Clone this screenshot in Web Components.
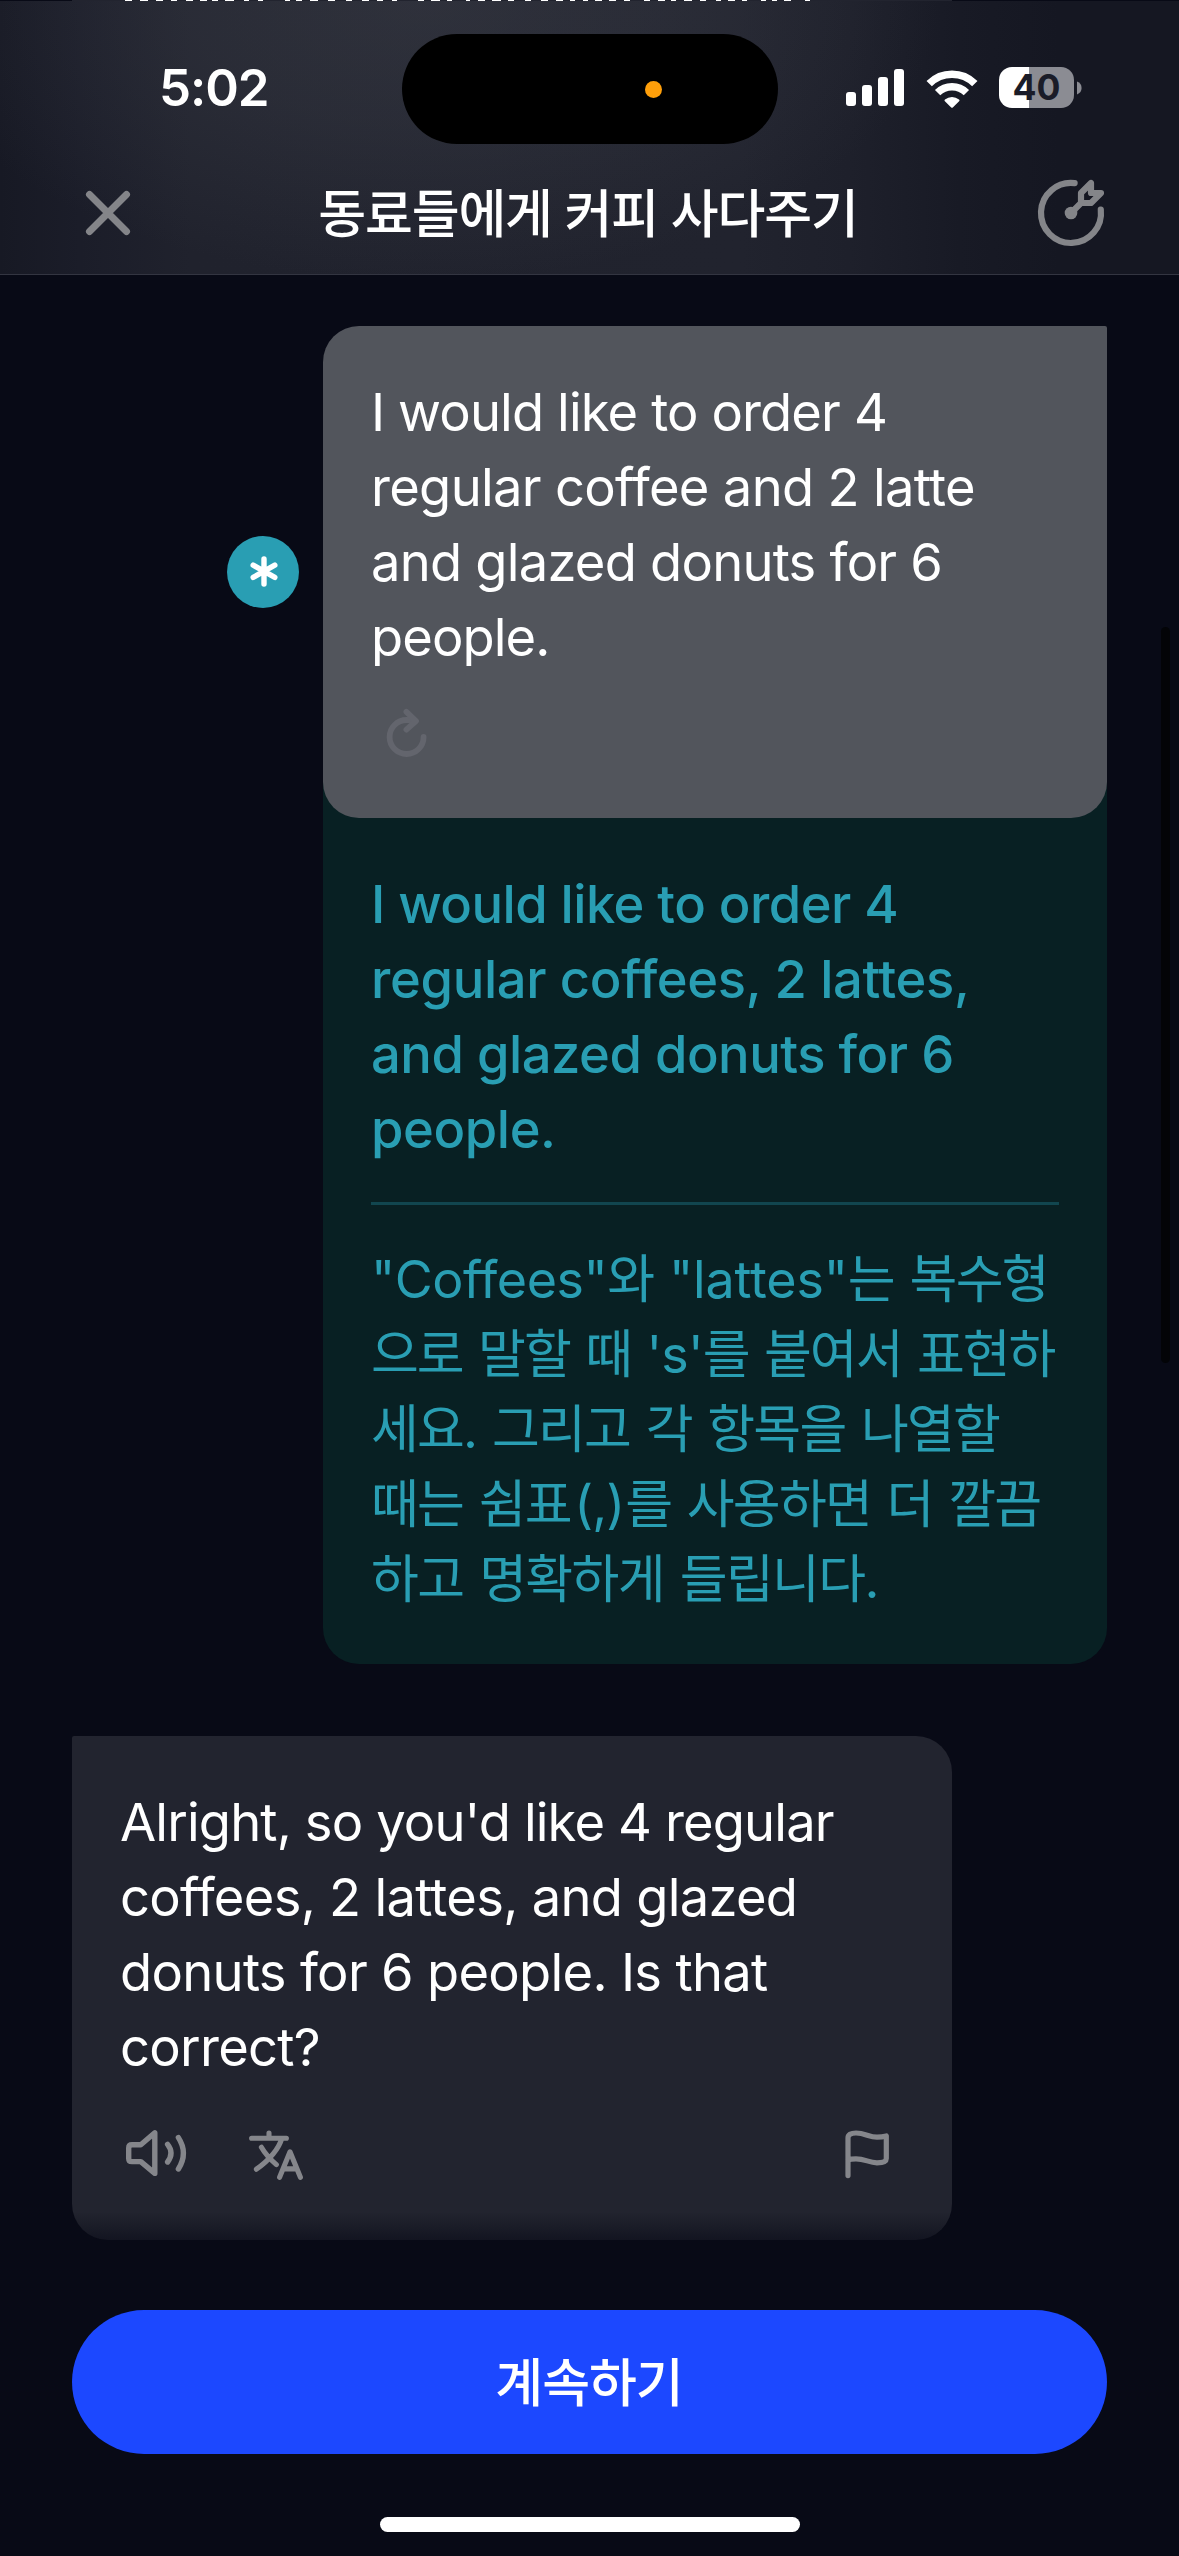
<!DOCTYPE html>
<html lang="ko">
<head>
<meta charset="utf-8">
<title>동료들에게 커피 사다주기</title>
<style>
  html, body { margin: 0; background: #080a16; }
  body { width: 1179px; height: 2556px; overflow: hidden; }
</style>
</head>
<body>
<chat-screen></chat-screen>
<script>
const define = (name, html, ready) => {
  const tpl = document.createElement('template');
  tpl.innerHTML = html;
  customElements.define(name, class extends HTMLElement {
    constructor() {
      super();
      this.attachShadow({ mode: 'open' }).append(tpl.content.cloneNode(true));
    }
    connectedCallback() { if (ready) ready(this); }
  });
};

/* Line of text; "track" is its letter spacing in px */
define('text-line', `
<style>:host{display:block;white-space:nowrap}</style><slot></slot>`,
  el => { if (el.hasAttribute('track')) el.style.letterSpacing = el.getAttribute('track') + 'px'; });
define('text-run', `
<style>:host{display:inline}:host([tight]){margin:0 1px 0 -13px}</style><slot></slot>`,
  el => { el.style.letterSpacing = el.getAttribute('track') + 'px'; });

const ICONS = {
  close: [44, 44, 7, '<path d="M3.5 3.5 40.5 40.5M40.5 3.5 3.5 40.5"/>'],
  goal: [66, 66, 6.2, '<path d="M36.6 3.2A30 30 0 1 0 62.8 29.6"/><circle cx="33" cy="33" r="6.3" fill="currentColor" stroke="none"/><path d="M33 33 43 23M43 13 53 3V13H63L53 23H43Z"/>'],
  retry: [42, 48, 5.8, '<path d="M37.6 28A17 17 0 1 1 20.6 11H28"/><path d="M20.4 2.8 30 12 20.4 20.6"/>'],
  speaker: [61, 46, 5.4, '<path d="M6 14.7H14.8L28.8 2.8V43.4L14.8 31.6H6Q2.7 31.6 2.7 28.4V17.9Q2.7 14.7 6 14.7Z"/><path d="M41.6 14.4Q48.4 23 41.6 32"/><path d="M52.4 7.6Q62.4 23 52.4 39"/>'],
  translate: [54, 50, 5.1, '<path d="M2.6 8.2H37.4M20 3V8M32.8 8.5C30 18 21 30 7.4 39.2M12.4 17.2C16 23.5 21.5 29.5 27.4 34.6" /><path d="M30.6 47.3 41 21.8 51.4 47.3M34.4 38.9H47.6"/>'],
  flag: [44, 48, 5.2, '<path d="M3 45.6V8Q3 3 11 3C20 3 24 7.2 32 7.2Q37 7.2 41.3 6V28.5Q41.3 32.8 32 32.8C24 32.8 20 28.8 11 28.8Q6 28.8 3 29.8"/>'],
  star: [28, 31, 5.4, '<path d="M14 3V28M3.2 9.2 24.8 21.4M24.8 9.2 3.2 21.4"/>']
};
define('line-icon', `
<style>:host{display:block;line-height:0}svg{display:block;fill:none;stroke:currentColor;stroke-linecap:round;stroke-linejoin:round;overflow:visible}</style>
<svg></svg>`, el => {
  const [w, h, s, body] = ICONS[el.getAttribute('name')];
  const svg = el.shadowRoot.querySelector('svg');
  svg.setAttribute('width', w);
  svg.setAttribute('height', h);
  svg.setAttribute('viewBox', `0 0 ${w} ${h}`);
  svg.setAttribute('stroke-width', s);
  svg.innerHTML = body;
});

/* One-pixel remainder of the message scrolled above the header */
define('scrolled-edge', `
<style>:host{display:block;height:1px;padding-left:72px}svg{display:block;background:#22242f}</style>
<svg width="880" height="1"></svg>`, el => {
  const dashes = [125,7,140,8,156,7,171,6,186,7,200,7,212,6,225,9,244,5,258,5,285,5,296,6,310,8,328,7,346,6,362,7,377,6,392,5,418,6,431,9,447,5,466,4,478,7,492,9,508,6,525,6,541,7,556,7,570,5,583,5,595,7,609,7,624,6,644,6,658,7,671,5,684,8,700,6,716,5,728,7,742,5,761,5,772,5,784,7,805,5];
  let s = '';
  for (let i = 0; i < dashes.length; i += 2) s += `<rect x="${dashes[i] - 72}" width="${dashes[i + 1]}" height="1" fill="#fff"/>`;
  el.shadowRoot.querySelector('svg').innerHTML = s;
});

define('status-bar', `
<style>
:host{display:grid;grid-template-columns:402px 376px 1fr;flex:none;height:151px;color:#fff}
.time{font-weight:600;font-size:51px;line-height:60px;letter-spacing:-1.1px;padding:57px 0 0 159px}
.island{margin-top:33px;height:110px;border-radius:55px;background:#000;display:flex;align-items:center;justify-content:flex-end}
.dot{width:17px;height:17px;border-radius:50%;background:#ff9f0a;margin-right:116px}
.right{display:flex;align-items:flex-start;padding-left:68px}
svg{display:block}
.wifi{margin:68px 0 0 22px}
.sig{margin-top:68px}
.bat{display:flex;align-items:center;margin:66px 0 0 21px;gap:3px}
.cell{width:75px;height:41px;border-radius:13px;background:linear-gradient(90deg,#fff 30px,#8b8c93 30px);color:#1a1c28;font-weight:650;font-size:35.5px;line-height:42px;text-align:center}
</style>
<div class="time">5:02</div>
<div class="island"><div class="dot"></div></div>
<div class="right">
<svg class="sig" width="58" height="37" fill="#fff"><rect y="23" width="10" height="14" rx="3"/><rect x="16" y="16" width="10" height="21" rx="3"/><rect x="32" y="8" width="10" height="29" rx="3"/><rect x="48" width="10" height="37" rx="3"/></svg>
<svg class="wifi" width="52" height="39" viewBox="0 0 52 39"><g fill="none" stroke="#fff" stroke-width="7.6"><path d="M3.2 14.6A32.4 32.4 0 0 1 48.8 14.6"/><path d="M11.6 23.6A20.6 20.6 0 0 1 40.4 23.6"/></g><path fill="#fff" d="M18.9 32.2Q18 31.3 19 30.5A11 11 0 0 1 33 30.5Q34 31.3 33.1 32.2L26.8 38.4Q26 39.2 25.2 38.4Z"/></svg>
<div class="bat"><div class="cell">40</div><svg width="5" height="14" viewBox="0 0 5 14"><path fill="#8b8c93" d="M0 .6Q4.6 2.4 4.6 7T0 13.4Z"/></svg></div>
</div>`);

define('app-header', `
<style>
:host{display:flex;flex-direction:column;box-sizing:border-box;height:274px;border-bottom:1px solid #333541;
background:radial-gradient(ellipse 520px 280px at 420px 0,rgba(72,75,84,.36),rgba(72,75,84,.24) 45%,rgba(72,75,84,0)),
linear-gradient(90deg,#171924 0,#1b1d29 80px,#20222d 190px,#21232e 740px,#1e202b 850px,#181a25 960px,#151722 1060px,#151722)}
.bar{display:grid;grid-template-columns:200px 1fr 200px;align-items:center;height:122px;color:#848589}
h1{margin:3px 0 0 -3px;font-size:52px;font-weight:500;line-height:75px;letter-spacing:-1.1px;color:#fff;text-align:center;white-space:nowrap}
.l{padding-left:86px}.r{padding-left:59px}
</style>
<status-bar></status-bar>
<div class="bar"><div class="l"><line-icon name="close"></line-icon></div><h1><slot></slot></h1><div class="r"><line-icon name="goal"></line-icon></div></div>`);

define('chat-bubble', `
<style>
:host{display:block;box-sizing:border-box;padding:49px 48px 47px;font-size:52.5px;line-height:75px;color:#fff}
:host([side=me]){width:784px;height:492px;border-radius:36px 2px 36px 36px;background:#52555c}
:host([side=tutor]){width:880px;height:504px;border-radius:2px 36px 36px 36px;background:#22242f}
.actions{display:flex;color:#85868b}
:host([side=me]) .actions{padding:34px 0 0 15px;color:#63656d}
:host([side=tutor]) .actions{padding:45px 15px 0 6px}
</style>
<slot></slot><div class="actions"><slot name="actions"></slot></div>`);

define('feedback-card', `
<style>
:host{display:block;box-sizing:border-box;width:784px;height:882px;margin-top:-36px;padding:85px 48px 47px;border-radius:0 0 36px 36px;background:#082023;color:#299eb3;font-size:52.5px;line-height:75px}
.fix{font-weight:500}
.why{border-top:3px solid #11464f;margin-top:35px;padding-top:37px;font-size:52px;word-spacing:2.8px}
</style>
<div class="fix"><slot name="fix"></slot></div><div class="why"><slot></slot></div>`);

define('hint-badge', `
<style>:host{display:flex;align-items:center;justify-content:center;width:72px;height:72px;border-radius:50%;background:#299eb3;color:#fff}line-icon{margin:-2px 0 0 2px}</style>
<line-icon name="star"></line-icon>`);

define('bottom-bar', `
<style>
:host{display:flex;flex-direction:column;align-items:center;box-sizing:border-box;height:344px;margin-top:-28px;padding-top:98px;z-index:1;background:linear-gradient(rgba(8,10,22,0),#080a16 48px)}
button{display:block;width:1035px;height:144px;border:0;border-radius:72px;padding:0 1px 5px 0;background:#1c48ff;color:#fff;font:inherit;font-size:52px;font-weight:500;letter-spacing:-1px}
.home{width:420px;height:15px;border-radius:8px;background:#fff;margin-top:63px}
</style>
<button><slot></slot></button><div class="home"></div>`);

define('chat-screen', `
<style>
:host{display:flex;flex-direction:column;position:relative;width:1179px;height:2556px;overflow:hidden;background:#080a16;font-family:Inter,"Noto Sans CJK KR",sans-serif}
main{display:flex;flex-direction:column;padding:51px 72px 0}
.mine{display:flex;flex-direction:column;align-items:flex-end}
.row{display:flex;align-items:center;gap:24px;z-index:1}
.theirs{margin-top:72px}
.tools{display:flex;flex:1;align-items:flex-start}
.tools .tr{margin-left:62px}
.tools .fl{margin-left:auto}
.thumb{position:absolute;left:1161px;top:627px;width:9px;height:736px;border-radius:5px;background:#030407}
</style>
<scrolled-edge></scrolled-edge>
<app-header>동료들에게 커피 사다주기</app-header>
<main>
<div class="mine">
<div class="row"><hint-badge></hint-badge>
<chat-bubble side="me">
<text-line track="-.87">I would like to order 4</text-line>
<text-line track="-.69">regular coffee and 2 latte</text-line>
<text-line track="-.77">and glazed donuts for 6</text-line>
<text-line track="-.9">people.</text-line>
<line-icon slot="actions" name="retry"></line-icon>
</chat-bubble></div>
<feedback-card>
<div slot="fix">
<text-line track="-.54">I would like to order 4</text-line>
<text-line track="-.34">regular coffees, 2 lattes,</text-line>
<text-line track="-.48">and glazed donuts for 6</text-line>
<text-line track="-.4">people.</text-line>
</div>
<text-line track="-1.7"><text-run track="-.5">"Coffees"</text-run>와 <text-run track="-.2">"lattes"</text-run>는 복수형</text-line>
<text-line track="-2">으로 말할 때 <text-run track="-.8">'s'</text-run>를 붙여서 표현하</text-line>
<text-line track="-1.8">세요. 그리고 각 항목을 나열할</text-line>
<text-line track="-1.8">때는 쉼표<text-run tight track="-1">(,)</text-run>를 사용하면 더 깔끔</text-line>
<text-line track="-1.65">하고 명확하게 들립니다.</text-line>
</feedback-card>
</div>
<chat-bubble class="theirs" side="tutor">
<text-line track="-.86">Alright, so you'd like 4 regular</text-line>
<text-line track="-.72">coffees, 2 lattes, and glazed</text-line>
<text-line track="-.7">donuts for 6 people. Is that</text-line>
<text-line track="-.7">correct?</text-line>
<div slot="actions" class="tools"><line-icon name="speaker"></line-icon><line-icon class="tr" name="translate"></line-icon><line-icon class="fl" name="flag"></line-icon></div>
</chat-bubble>
</main>
<bottom-bar>계속하기</bottom-bar>
<div class="thumb"></div>`);
</script>
</body>
</html>
